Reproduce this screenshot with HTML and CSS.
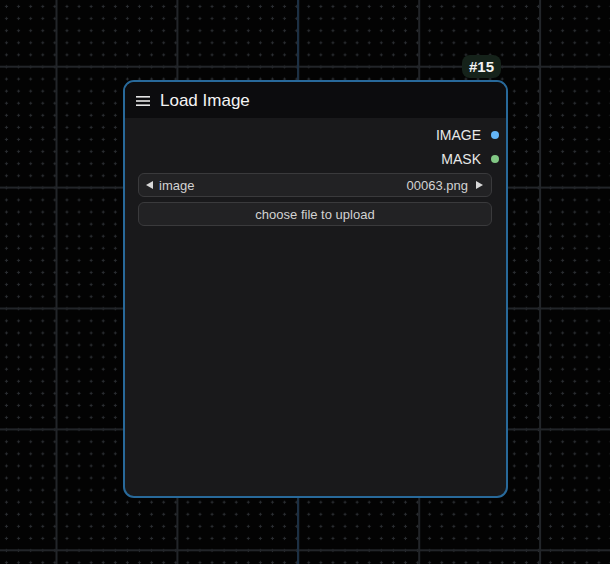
FILE: index.html
```html
<!DOCTYPE html>
<html lang="en">
<head>
<meta charset="utf-8">
<title>Load Image</title>
<link rel="stylesheet" href="styles.css">
</head>
<body>
<div class="canvas">
  <svg class="grid" width="610" height="564" xmlns="http://www.w3.org/2000/svg">
    <defs>
      <pattern id="dots" x="0.5" y="0.5" width="12.09" height="12.09" patternUnits="userSpaceOnUse">
        <rect x="4.5" y="5.5" width="3" height="1" fill="#2a2d31"/>
        <rect x="5.5" y="4.5" width="1" height="3" fill="#2a2d31"/>
      </pattern>
      <pattern id="cells" x="55.5" y="65.7" width="120.9" height="120.9" patternUnits="userSpaceOnUse">
        <rect x="0" y="0" width="2" height="120.9" fill="#222529"/>
        <rect x="0" y="0" width="120.9" height="2" fill="#222529"/>
      </pattern>
    </defs>
    <rect width="610" height="564" fill="#030303"/>
    <rect width="610" height="564" fill="url(#dots)"/>
    <rect width="610" height="564" fill="url(#cells)"/>
    <rect x="297" y="0" width="2" height="564" fill="#1c3044"/>
  </svg>

  <div class="badge">#15</div>

  <div class="node">
    <div class="node-header">
      <svg class="menu-icon" width="14" height="12" viewBox="0 0 14 12">
        <rect x="0" y="1" width="14" height="1.6" fill="#e6e6e6"/>
        <rect x="0" y="5.2" width="14" height="1.6" fill="#e6e6e6"/>
        <rect x="0" y="9.4" width="14" height="1.6" fill="#e6e6e6"/>
      </svg>
      <span class="node-title">Load Image</span>
    </div>
    <div class="node-body">
      <div class="outputs">
        <div class="output"><span>IMAGE</span><span class="slot slot-image"></span></div>
        <div class="output"><span>MASK</span><span class="slot slot-mask"></span></div>
      </div>
      <div class="widgets">
        <div class="widget combo">
          <span class="arrow arrow-left"></span>
          <span class="label">image</span>
          <span class="value">00063.png</span>
          <span class="arrow arrow-right"></span>
        </div>
        <div class="widget button">choose file to upload</div>
      </div>
    </div>
  </div>
</div>
</body>
</html>
```

FILE: styles.css
```css
* { box-sizing: border-box; }
html, body {
  margin: 0;
  padding: 0;
  background: #030303;
  font-family: "Liberation Sans", Arial, sans-serif;
}
.canvas {
  position: relative;
  width: 610px;
  height: 564px;
  overflow: hidden;
}
.grid {
  position: absolute;
  left: 0;
  top: 0;
  display: block;
}
.badge {
  position: absolute;
  left: 462px;
  top: 55px;
  height: 23px;
  padding: 0 7px;
  border-radius: 8px;
  background: #15221a;
  color: #f2f2f2;
  font-size: 15px;
  font-weight: bold;
  line-height: 23px;
}
.node {
  position: absolute;
  left: 123px;
  top: 80px;
  width: 385px;
  height: 418px;
  border: 2px solid #28699a;
  border-radius: 11px;
  background: #19191b;
  overflow: hidden;
  display: flex;
  flex-direction: column;
}
.node-header {
  height: 36px;
  background: #0c0c0e;
  display: flex;
  align-items: center;
  padding-left: 11px;
  gap: 10px;
}
.menu-icon { display: block; margin-top: 1px; }
.node-title {
  color: #f4f4f4;
  font-size: 17px;
  line-height: 20px;
  margin-top: 1px;
}
.node-body {
  padding-top: 5px;
}
.outputs {
  display: flex;
  flex-direction: column;
  align-items: flex-end;
  padding-right: 7px;
}
.output {
  height: 24px;
  display: flex;
  align-items: center;
  gap: 10px;
  color: #e8e8e8;
  font-size: 14px;
}
.slot {
  width: 8px;
  height: 8px;
  border-radius: 50%;
}
.slot-image { background: #64b5f6; }
.slot-mask { background: #81c784; }
.widgets {
  display: flex;
  flex-direction: column;
  gap: 5px;
  margin: 2px 14px 0 13px;
}
.widget {
  height: 24px;
  border: 1px solid #3a3a3c;
  border-radius: 6px;
  background: #222224;
  color: #d2d2d2;
  font-size: 13px;
  display: flex;
  align-items: center;
}
.combo {
  padding: 0 8px 0 7px;
}
.combo .label { margin-left: 6px; flex: 1; }
.combo .value { margin-right: 8px; }
.arrow {
  width: 0;
  height: 0;
  border-top: 4px solid transparent;
  border-bottom: 4px solid transparent;
}
.arrow-left { border-right: 7px solid #d8d8d8; }
.arrow-right { border-left: 7px solid #d8d8d8; }
.button {
  justify-content: center;
}
```
